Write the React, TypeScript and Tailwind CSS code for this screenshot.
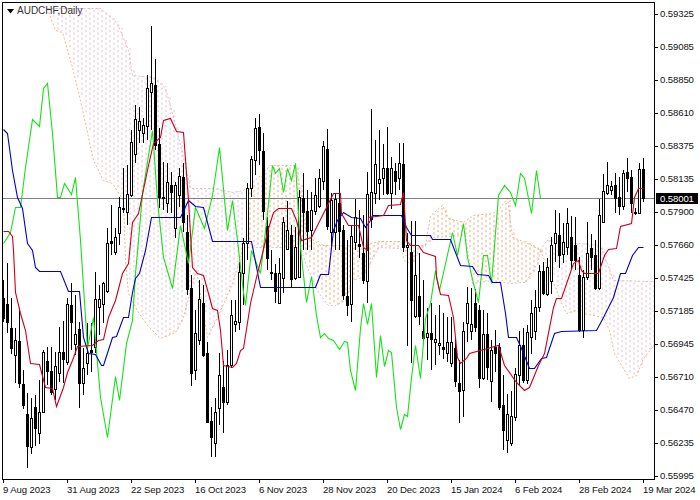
// AUDCHF daily chart with Ichimoku cloud

type Pt = [number, number];

// high, body top, body bottom, low, 1 = up bar (hollow)
const bars: number[][] = [
  [280, 298, 318, 322, 0], [263, 304, 322, 333, 0], [298, 328, 348, 354, 0], [328, 340, 355, 383, 1],
  [308, 341, 383, 388, 0], [370, 384, 405, 409, 0], [393, 414, 446, 468, 0], [398, 418, 447, 454, 1],
  [395, 407, 428, 446, 0], [380, 412, 433, 444, 1], [350, 352, 412, 413, 1], [347, 361, 371, 385, 0],
  [347, 371, 392, 395, 0], [352, 366, 389, 400, 1], [327, 352, 373, 382, 1], [321, 352, 359, 383, 0],
  [298, 304, 362, 365, 1], [283, 305, 322, 350, 0], [295, 334, 344, 355, 1], [322, 329, 383, 408, 0],
  [348, 368, 383, 395, 1], [323, 353, 363, 375, 1], [323, 350, 352, 372, 0], [272, 299, 347, 353, 1],
  [285, 299, 307, 335, 1], [282, 283, 304, 323, 1], [228, 243, 291, 293, 1], [205, 241, 243, 255, 0],
  [228, 237, 252, 255, 1], [197, 207, 233, 245, 1], [168, 208, 209, 213, 0], [165, 194, 212, 225, 1],
  [130, 142, 195, 197, 1], [105, 119, 154, 163, 1], [107, 121, 130, 143, 1], [118, 125, 133, 143, 1],
  [75, 88, 126, 140, 1], [26, 83, 92, 130, 1], [59, 85, 145, 150, 0], [128, 144, 197, 208, 0],
  [162, 197, 198, 210, 1], [163, 182, 203, 213, 1], [172, 185, 192, 213, 0], [182, 185, 228, 238, 1],
  [168, 176, 195, 207, 1], [163, 177, 222, 232, 0], [215, 232, 289, 295, 0], [275, 288, 373, 386, 0],
  [310, 333, 370, 380, 1], [280, 299, 340, 345, 1], [285, 303, 355, 357, 0], [342, 353, 422, 423, 0],
  [407, 421, 437, 457, 0], [398, 412, 443, 457, 1], [353, 375, 408, 425, 1], [361, 387, 402, 433, 0],
  [350, 365, 402, 405, 1], [300, 315, 365, 368, 1], [300, 321, 324, 332, 1], [262, 272, 322, 330, 1],
  [238, 243, 273, 305, 1], [183, 188, 243, 260, 1], [156, 159, 188, 197, 1], [118, 128, 160, 175, 1],
  [114, 127, 150, 165, 0], [133, 151, 211, 220, 0], [217, 226, 258, 270, 0], [250, 272, 273, 280, 0],
  [264, 273, 291, 303, 0], [258, 273, 303, 304, 1], [217, 222, 278, 293, 1], [201, 230, 249, 250, 1],
  [225, 235, 279, 288, 0], [227, 247, 278, 280, 1], [190, 197, 277, 278, 1], [173, 198, 212, 250, 0],
  [190, 211, 231, 250, 0], [192, 210, 230, 250, 1], [178, 195, 211, 215, 1], [169, 178, 206, 208, 1],
  [141, 146, 181, 190, 1], [129, 149, 226, 230, 0], [193, 200, 232, 248, 1], [193, 199, 232, 250, 1],
  [179, 203, 231, 250, 0], [225, 230, 295, 300, 0], [240, 296, 305, 316, 0], [225, 236, 304, 322, 1],
  [199, 217, 242, 250, 1], [210, 244, 246, 258, 0], [215, 253, 280, 284, 0], [172, 194, 281, 303, 1],
  [109, 192, 219, 228, 1], [140, 164, 193, 204, 1], [130, 179, 183, 200, 1], [144, 168, 178, 195, 1],
  [127, 168, 193, 195, 0], [157, 168, 193, 209, 1], [163, 171, 181, 195, 0], [143, 163, 178, 190, 1],
  [143, 164, 247, 252, 0], [233, 245, 247, 346, 1], [221, 252, 300, 363, 0], [221, 275, 316, 318, 1],
  [253, 296, 316, 325, 0], [280, 331, 338, 342, 0], [308, 333, 337, 360, 1], [303, 333, 339, 370, 0],
  [315, 339, 342, 365, 1], [305, 343, 345, 355, 1], [313, 347, 349, 359, 0], [317, 342, 353, 362, 1],
  [317, 342, 363, 367, 1], [337, 348, 381, 387, 0], [360, 383, 391, 423, 0], [322, 331, 390, 417, 1],
  [287, 303, 323, 342, 1], [288, 324, 331, 340, 1], [289, 303, 327, 332, 0], [305, 310, 378, 388, 0],
  [310, 334, 378, 380, 1], [313, 334, 367, 380, 0], [340, 350, 381, 402, 1], [330, 347, 353, 372, 0],
  [343, 347, 407, 410, 0], [375, 405, 430, 450, 0], [394, 414, 440, 453, 1], [391, 416, 443, 446, 1],
  [368, 374, 417, 421, 1], [331, 345, 375, 385, 1], [328, 345, 380, 383, 0], [325, 332, 380, 384, 1],
  [300, 313, 337, 354, 1], [290, 307, 331, 340, 1], [265, 271, 307, 312, 1], [262, 271, 293, 295, 0],
  [258, 267, 294, 296, 1], [237, 245, 281, 294, 1], [210, 233, 243, 262, 1], [213, 235, 255, 268, 0],
  [223, 242, 254, 263, 1], [208, 223, 247, 255, 1], [216, 237, 260, 270, 0], [217, 245, 260, 270, 0],
  [257, 275, 330, 332, 0], [270, 277, 330, 338, 1], [222, 253, 277, 280, 1], [234, 248, 257, 270, 0],
  [240, 255, 288, 290, 0], [199, 215, 288, 290, 1], [174, 191, 222, 223, 1], [162, 185, 193, 195, 1],
  [181, 186, 190, 195, 1], [173, 185, 198, 213, 0], [177, 197, 206, 215, 0], [170, 173, 206, 210, 1],
  [158, 172, 178, 192, 0], [170, 177, 203, 213, 0], [208, 212, 213, 215, 0], [163, 169, 213, 214, 1],
  [158, 169, 198, 202, 0],
];

const blue: Pt[] = [
  [3, 129], [7, 133], [12, 170], [17, 197], [22, 208], [27, 243], [32, 250], [35, 267], [39, 271], [60, 271],
  [68, 291], [79, 291], [83, 337], [88, 353], [95, 354], [101, 365], [103, 365], [112, 337], [116, 336], [123, 317],
  [128, 317], [132, 292], [135, 278], [139, 273], [145, 250], [151, 217], [180, 217], [188, 200], [195, 206], [203, 207],
  [212, 241], [251, 241], [260, 287], [315, 287], [320, 274], [328, 274], [333, 230], [337, 220], [343, 212], [351, 217],
  [360, 218], [365, 227], [370, 220], [372, 215], [401, 215], [406, 227], [411, 235], [430, 235], [432, 239], [450, 239],
  [460, 265], [472, 266], [477, 274], [488, 275], [492, 282], [500, 282], [505, 313], [508, 337], [516, 337], [521, 348],
  [529, 368], [534, 368], [541, 358], [546, 357], [554, 333], [561, 331], [596, 330], [603, 317], [609, 305], [613, 297],
  [620, 273], [625, 273], [632, 255], [638, 247], [643, 247],
];

const red: Pt[] = [
  [3, 231], [8, 231], [12, 236], [13, 250], [15, 292], [20, 313], [25, 330], [30, 363], [39, 364], [45, 387],
  [52, 388], [56, 406], [63, 387], [67, 372], [72, 360], [77, 346], [92, 345], [98, 340], [103, 339], [108, 317],
  [115, 300], [122, 273], [128, 263], [132, 222], [138, 213], [148, 165], [153, 143], [160, 137], [163, 120], [170, 118],
  [176, 131], [183, 132], [188, 200], [192, 267], [197, 273], [203, 275], [208, 293], [212, 308], [217, 310], [220, 330],
  [223, 365], [232, 367], [236, 363], [240, 350], [243, 348], [250, 303], [256, 277], [261, 257], [268, 228], [273, 212],
  [278, 208], [291, 208], [296, 220], [301, 240], [311, 237], [321, 217], [333, 193], [340, 193], [341, 213], [348, 225],
  [358, 225], [363, 247], [367, 250], [368, 217], [383, 215], [388, 205], [400, 204], [403, 192], [406, 240], [410, 245],
  [418, 245], [423, 252], [435, 256], [436, 277], [440, 294], [448, 295], [453, 317], [457, 357], [460, 363], [466, 358],
  [469, 353], [498, 345], [504, 365], [516, 382], [524, 390], [529, 387], [538, 365], [544, 353], [553, 307], [556, 298],
  [561, 298], [573, 263], [578, 260], [581, 270], [584, 273], [598, 273], [604, 255], [608, 249], [616, 248], [620, 226],
  [631, 223], [634, 197], [638, 188], [643, 188],
];

const green: Pt[] = [
  [3, 243], [10, 232], [15, 207], [20, 207], [25, 167], [32, 119], [39, 126], [43, 88], [47, 83], [52, 133],
  [57, 197], [60, 197], [64, 183], [71, 194], [75, 177], [80, 240], [85, 317], [87, 348], [93, 317], [100, 397],
  [107, 437], [115, 376], [119, 400], [126, 343], [132, 320], [135, 273], [138, 240], [142, 193], [152, 130], [157, 200],
  [163, 257], [172, 288], [180, 225], [188, 263], [195, 207], [204, 228], [212, 195], [219, 147], [227, 230], [232, 200],
  [237, 240], [243, 292], [245, 305], [251, 250], [260, 273], [267, 213], [272, 165], [275, 173], [279, 168], [283, 192],
  [287, 168], [291, 180], [295, 163], [300, 247], [306, 302], [311, 276], [316, 315], [320, 337], [324, 333], [328, 338],
  [333, 340], [339, 349], [344, 341], [347, 342], [350, 370], [355, 390], [360, 328], [363, 303], [367, 324], [371, 303],
  [376, 377], [380, 335], [384, 366], [388, 350], [391, 352], [396, 407], [400, 429], [404, 414], [407, 416], [411, 377],
  [415, 345], [420, 378], [425, 318], [430, 303], [435, 270], [439, 290], [452, 232], [457, 255], [463, 223], [467, 257],
  [473, 283], [478, 302], [483, 255], [487, 255], [491, 283], [498, 195], [504, 185], [510, 192], [515, 205], [520, 173],
  [524, 178], [531, 213], [536, 170], [540, 198],
];

const THISTLE = "#dba9bd";
const SANDY = "#f0a070";

const clouds: { top: Pt[]; bottom: Pt[]; color: string; topEdge: string; bottomEdge: string; alpha: number }[] = [
  {
    color: THISTLE, topEdge: THISTLE, bottomEdge: SANDY, alpha: 0.55,
    top: [[47, 8], [100, 8], [117, 23], [128, 50], [132, 75], [153, 77], [165, 88], [172, 113], [183, 157], [190, 188], [213, 188], [232, 192], [243, 190]],
    bottom: [[47, 8], [50, 17], [55, 30], [62, 32], [72, 67], [80, 100], [93, 160], [103, 180], [112, 183], [123, 200], [125, 260], [128, 293], [138, 312], [147, 325], [160, 338], [175, 332], [183, 317], [190, 290], [196, 270], [207, 337], [217, 317], [232, 283], [243, 247]],
  },
  {
    color: SANDY, topEdge: SANDY, bottomEdge: THISTLE, alpha: 0.7,
    top: [[243, 190], [258, 177], [270, 165], [295, 165], [300, 190], [306, 235], [320, 245], [362, 245], [378, 241], [402, 241], [415, 245], [425, 245]],
    bottom: [[243, 247], [300, 247], [306, 265], [318, 292], [328, 305], [335, 305], [345, 300], [352, 280], [362, 277], [378, 247], [400, 248], [405, 262], [412, 262], [418, 250], [425, 245]],
  },
  {
    color: SANDY, topEdge: SANDY, bottomEdge: THISTLE, alpha: 0.7,
    top: [[425, 245], [430, 215], [442, 205], [448, 218], [463, 222], [473, 215], [492, 213], [498, 210], [507, 198], [512, 237], [525, 242], [537, 248], [540, 250]],
    bottom: [[425, 245], [430, 237], [465, 235], [472, 283], [492, 280], [510, 283], [525, 282], [537, 263], [540, 250]],
  },
  {
    color: THISTLE, topEdge: THISTLE, bottomEdge: SANDY, alpha: 0.55,
    top: [[540, 250], [546, 240], [600, 245], [613, 280], [652, 281]],
    bottom: [[540, 250], [563, 307], [566, 313], [576, 310], [583, 313], [593, 315], [603, 317], [609, 330], [614, 353], [629, 378], [636, 375], [643, 358], [652, 347]],
  },
];

const prices = ["0.59325", "0.59085", "0.58850", "0.58610", "0.58375", "0.58135", "0.57900", "0.57660", "0.57425", "0.57185", "0.56945", "0.56710", "0.56470", "0.56235", "0.55995"];
const dates = ["9 Aug 2023", "31 Aug 2023", "22 Sep 2023", "16 Oct 2023", "6 Nov 2023", "28 Nov 2023", "20 Dec 2023", "15 Jan 2024", "6 Feb 2024", "28 Feb 2024", "19 Mar 2024"];

const toPath = (pts: Pt[]) => pts.map((p) => `${p[0] + 0.5},${p[1] + 0.5}`).join(" ");

const yAt = (pts: Pt[], x: number) => {
  for (let i = 1; i < pts.length; i++) {
    if (x <= pts[i][0]) {
      const [x0, y0] = pts[i - 1];
      const [x1, y1] = pts[i];
      return y0 + ((y1 - y0) * (x - x0)) / (x1 - x0 || 1);
    }
  }
  return pts[pts.length - 1][1];
};

const Cloud = ({ cloud }: { cloud: (typeof clouds)[number] }) => {
  const from = cloud.top[0][0];
  const to = cloud.top[cloud.top.length - 1][0];
  const cols: number[] = [];
  for (let x = 3; x <= 652; x += 4) if (x > from && x < to) cols.push(x);
  return (
    <g fill="none">
      {cols.map((x) => {
        const top = Math.round(yAt(cloud.top, x));
        const bottom = Math.round(yAt(cloud.bottom, x));
        const phase = (x - 3) % 8 === 0 ? 0 : 2.5;
        return (
          <line key={x} x1={x + 3} x2={x + 3} y1={top} y2={bottom} stroke={cloud.color} strokeWidth="1.3" opacity={cloud.alpha} strokeDasharray="2.2 2.8" strokeDashoffset={(top + phase) % 5} />
        );
      })}
      <polyline points={toPath(cloud.top)} stroke={cloud.topEdge} opacity="0.8" strokeDasharray="2 2" />
      <polyline points={toPath(cloud.bottom)} stroke={cloud.bottomEdge} opacity="0.8" strokeDasharray="2 2" />
    </g>
  );
};

const Candle = ({ bar, x }: { bar: number[]; x: number }) => {
  const [high, top, bottom, low, up] = bar;
  return (
    <g shapeRendering="crispEdges">
      <rect x={x} y={high} width="1" height={low - high} fill="#000" />
      {up ? (
        <rect x={x - 0.5} y={top + 0.5} width="2" height={Math.max(bottom - top, 1)} fill="#fff" stroke="#000" strokeWidth="1" />
      ) : (
        <rect x={x - 1} y={top} width="3" height={Math.max(bottom - top, 1) + 1} fill="#000" />
      )}
    </g>
  );
};

const PriceChart = () => (
  <svg className="block w-[651px] h-[476px]" viewBox="3 3 651 476">
    {clouds.map((c, i) => (
      <Cloud key={i} cloud={c} />
    ))}
    <line x1="3" x2="654" y1="198.5" y2="198.5" stroke="#808080" strokeWidth="1" />
    {bars.map((b, i) => (
      <Candle key={i} bar={b} x={3 + 4 * i} />
    ))}
    <g fill="none" strokeWidth="1.1">
      <polyline points={toPath(green)} stroke="#18e018" />
      <polyline points={toPath(blue)} stroke="#0000c0" />
      <polyline points={toPath(red)} stroke="#c80020" />
    </g>
  </svg>
);

const App = () => {
  return (
    <div className="relative w-[700px] h-[500px] overflow-hidden bg-white pt-[2px] pl-[2px] font-['Liberation_Sans',sans-serif] text-[9.6px] leading-[12px] tracking-[-0.12px] text-[#111]">
      <div className="flex h-[478px]">
        <div className="relative w-[653px] h-[478px] border border-black">
          <PriceChart />
          <div className="absolute left-[4px] top-[2px] flex items-center gap-[2px] text-[10px] tracking-normal text-[#333]">
            <svg width="7" height="5" viewBox="0 0 7 5" className="mr-[1px]">
              <path d="M0 0H7L3.5 4.5Z" fill="#000" />
            </svg>
            <span>AUDCHF,Daily</span>
          </div>
        </div>
        <div className="flex flex-col gap-[21px] pt-[6px]">
          {prices.map((p) => (
            <div key={p} className="flex items-center h-[12px]">
              <div className="w-[3px] h-px bg-black mr-[2px]" />
              <span>{p}</span>
            </div>
          ))}
        </div>
      </div>
      <div className="flex pl-px">
        {dates.map((d) => (
          <div key={d} className="w-[64px] shrink-0 whitespace-nowrap">
            <div className="w-px h-[3px] bg-black" />
            <div className="mt-[1px]">{d}</div>
          </div>
        ))}
      </div>
      <div className="absolute left-[656px] top-[193px] w-[42px] h-[11px] bg-black pl-[4px] text-white leading-[11px]">0.58001</div>
    </div>
  );
};

export default App;
